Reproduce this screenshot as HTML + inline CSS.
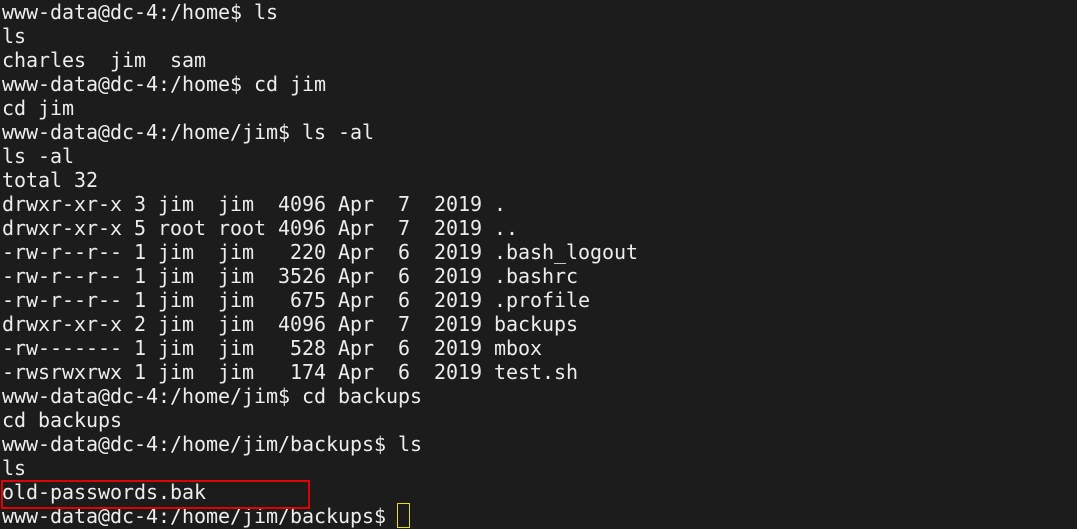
<!DOCTYPE html>
<html><head><style>
html,body{margin:0;padding:0;background:#1c1c1c;width:1077px;height:529px;overflow:hidden}
pre{margin:0;position:absolute;left:2px;top:0;font-family:"DejaVu Sans Mono","Liberation Mono",monospace;font-size:20px;line-height:24px;color:#ececec;letter-spacing:-0.04px}
.box{position:absolute;left:1px;top:480px;width:305px;height:25px;border:2px solid #e00000}
.cur{position:absolute;left:397px;top:503px;width:11px;height:23px;border:1px solid #e6e000}
</style></head><body>
<pre>www-data@dc-4:/home$ ls
ls
charles  jim  sam
www-data@dc-4:/home$ cd jim
cd jim
www-data@dc-4:/home/jim$ ls -al
ls -al
total 32
drwxr-xr-x 3 jim  jim  4096 Apr  7  2019 .
drwxr-xr-x 5 root root 4096 Apr  7  2019 ..
-rw-r--r-- 1 jim  jim   220 Apr  6  2019 .bash_logout
-rw-r--r-- 1 jim  jim  3526 Apr  6  2019 .bashrc
-rw-r--r-- 1 jim  jim   675 Apr  6  2019 .profile
drwxr-xr-x 2 jim  jim  4096 Apr  7  2019 backups
-rw------- 1 jim  jim   528 Apr  6  2019 mbox
-rwsrwxrwx 1 jim  jim   174 Apr  6  2019 test.sh
www-data@dc-4:/home/jim$ cd backups
cd backups
www-data@dc-4:/home/jim/backups$ ls
ls
old-passwords.bak
www-data@dc-4:/home/jim/backups$ </pre>
<div class="box"></div>
<div class="cur"></div>
</body></html>
